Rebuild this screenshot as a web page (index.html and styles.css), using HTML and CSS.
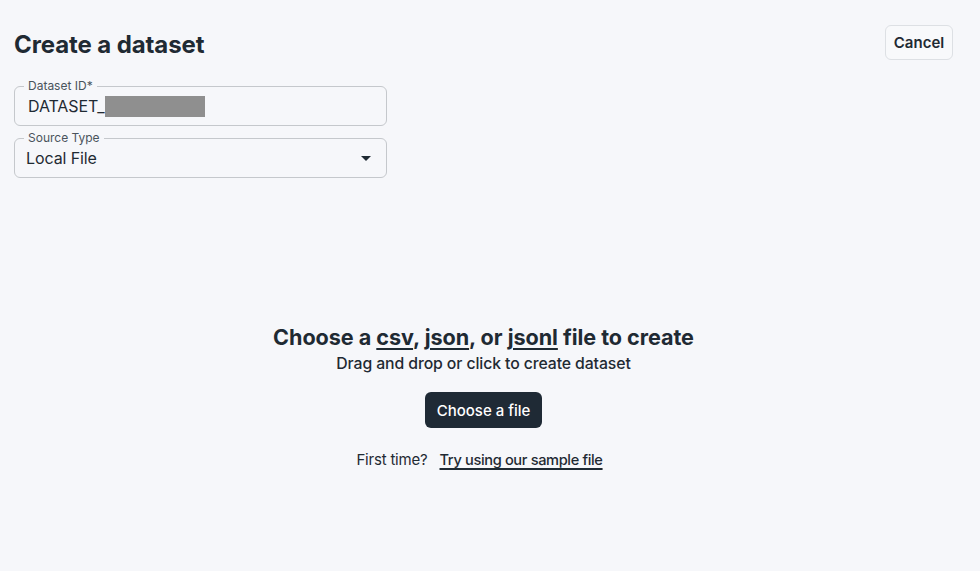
FILE: index.html
```html
<!DOCTYPE html>
<html lang="en">
<head>
<meta charset="utf-8">
<title>Create a dataset</title>
<link rel="stylesheet" href="styles.css">
</head>
<body>
<div class="page">
  <header class="top">
    <div class="form">
      <h1 class="title">Create a dataset</h1>
      <div class="field">
        <span class="field-label">Dataset ID*</span>
        <div class="field-value">DATASET_<span class="redact"></span></div>
      </div>
      <div class="field select">
        <span class="field-label">Source Type</span>
        <div class="field-value">Local File</div>
        <svg class="caret" width="10" height="5" viewBox="0 0 10 5"><path d="M0 0h10L5 5z" fill="#1f2a33"/></svg>
      </div>
    </div>
    <button class="btn-cancel">Cancel</button>
  </header>
  <main class="drop">
    <h2 class="drop-title">Choose a <u>csv</u>, <u>json</u>, or <u>jsonl</u> file to create</h2>
    <p class="drop-sub">Drag and drop or click to create dataset</p>
    <button class="btn-choose">Choose a file</button>
    <p class="first">First time?<a class="sample" href="#">Try using our sample file</a></p>
  </main>
</div>
</body>
</html>
```
FILE: styles.css
```css
* { box-sizing: border-box; }
html, body { margin: 0; padding: 0; }
body {
  background: #f6f7fa;
  color: #1f2a33;
  font-family: Inter, "Liberation Sans", sans-serif;
  height: 571px;
  overflow: hidden;
}
.page {
  padding: 25px 27px 0 14px;
}
.top {
  display: flex;
  justify-content: space-between;
  align-items: flex-start;
}
.form {
  width: 373px;
  display: flex;
  flex-direction: column;
}
.title {
  margin: 5px 0 0;
  font-size: 24px;
  line-height: 29px;
  font-weight: 700;
  letter-spacing: -0.1px;
}
.field {
  position: relative;
  height: 40px;
  border: 1px solid #c5c8cc;
  border-radius: 6px;
  margin-top: 27px;
  display: flex;
  align-items: center;
  padding: 0 13px;
}
.field.select { margin-top: 12px; padding-left: 11px; }
.field-label {
  position: absolute;
  left: 9px;
  top: -8px;
  padding: 0 4px;
  background: #f6f7fa;
  font-size: 12px;
  line-height: 14px;
  color: #4a545c;
}
.field-value {
  font-size: 16px;
  display: flex;
  align-items: center;
  color: #1f2a33;
  letter-spacing: -0.1px;
}
.redact {
  display: inline-block;
  width: 100px;
  height: 21px;
  background: #8f8f8f;
  margin-left: 0;
}
.caret {
  margin-left: auto;
  margin-right: 2px;
}
.btn-cancel {
  font-family: inherit;
  font-size: 15px;
  font-weight: 600;
  color: #1f2a33;
  background: #f8f9fb;
  border: 1px solid #dde0e4;
  border-radius: 6px;
  width: 68px;
  height: 35px;
  padding: 0;
}
.drop {
  display: flex;
  flex-direction: column;
  align-items: center;
  margin-top: 145px;
}
.drop-title {
  margin: 0;
  font-size: 21.6px;
  line-height: 28px;
  font-weight: 700;
  letter-spacing: -0.05px;
}
.drop-title u { text-underline-offset: 3px; text-decoration-thickness: 2px; }
.drop-sub {
  margin: 2px 0 0;
  font-size: 15.8px;
  line-height: 22px;
  font-weight: 500;
  letter-spacing: -0.1px;
}
.btn-choose {
  margin-top: 17px;
  font-family: inherit;
  font-size: 15px;
  font-weight: 500;
  color: #fff;
  background: #1f2a35;
  border: 0;
  border-radius: 6px;
  width: 117px;
  height: 36px;
  padding: 0;
}
.first {
  margin: 22px 0 0;
  padding-right: 8px;
  font-size: 15px;
  line-height: 20px;
  color: #1f2a33;
  letter-spacing: -0.2px;
}
.sample {
  margin-left: 12px;
  color: #1f2a33;
  font-size: 14.6px;
  font-weight: 500;
  letter-spacing: -0.35px;
  text-underline-offset: 3px;
  text-decoration-thickness: 1.5px;
}
```
